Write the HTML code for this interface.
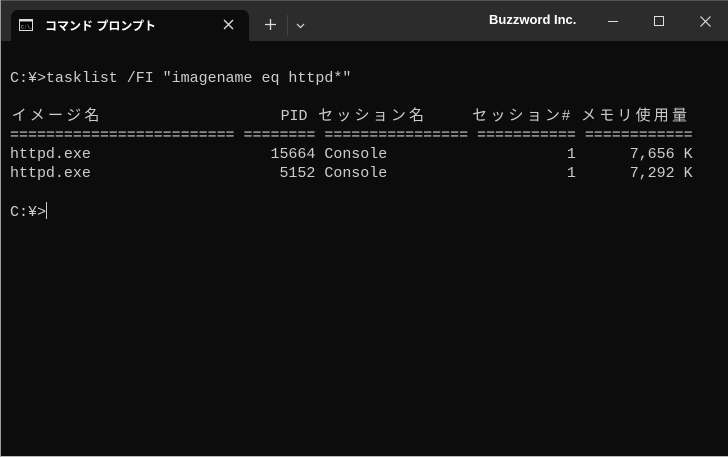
<!DOCTYPE html>
<html><head><meta charset="utf-8"><style>
html,body{margin:0;padding:0;width:728px;height:457px;overflow:hidden;background:#0c0c0c}
#win{position:absolute;left:0;top:0;border-left:1px solid #9a9a9a;border-bottom:1px solid #bbb;box-sizing:border-box;width:728px;height:457px;background:#0c0c0c}
#title{position:absolute;left:0;top:0;width:728px;height:40px;background:#2c2c2c;border-top:1px solid #555}
#tab{position:absolute;left:10px;top:9px;width:238px;height:31px;background:#0c0c0c;border-radius:7px 7px 0 0}
.t{position:absolute;color:#fff;font-family:"Liberation Sans","Noto Sans CJK JP",sans-serif;font-size:12px;font-weight:bold}
#term{position:absolute;left:9px;top:69px;font-family:"Liberation Mono","Noto Sans CJK JP",monospace;font-size:15px;letter-spacing:-0.02px;line-height:19px;color:#cccccc;white-space:pre}
.w{display:inline-block;width:18.2px;text-align:center;letter-spacing:0}
</style></head><body><div id="win">
<div id="title">
<div id="tab">
<svg style="position:absolute;left:8px;top:9px" width="14" height="12" viewBox="0 0 14 12"><rect x="0.5" y="0.5" width="13" height="11" fill="#000" stroke="#ddd"/><rect x="0.5" y="0.5" width="13" height="2" fill="#ddd"/><text x="2" y="9.5" font-size="5" fill="#ddd" font-family="Liberation Mono">C:\_</text></svg>
<div class="t" style="left:34px;top:7px">コマンド プロンプト</div>
<svg style="position:absolute;left:212px;top:9px" width="11" height="11" viewBox="0 0 11 11"><path d="M1 1L10 10M10 1L1 10" stroke="#ddd" stroke-width="1.3"/></svg>
</div>
<svg style="position:absolute;left:264px;top:18px" width="11" height="11" viewBox="0 0 11 11"><path d="M5.5 0V11M0 5.5H11" stroke="#ddd" stroke-width="1.3"/></svg>
<div style="position:absolute;left:286px;top:14px;width:1px;height:20px;background:#444"></div>
<svg style="position:absolute;left:295px;top:22px" width="9" height="6" viewBox="0 0 9 6"><path d="M1 1L4.5 4.5L8 1" stroke="#ddd" stroke-width="1.2" fill="none"/></svg>
<div class="t" style="left:488px;top:11px;font-size:13px">Buzzword Inc.</div>
<div style="position:absolute;left:607px;top:20px;width:10px;height:1px;background:#ddd"></div>
<div style="position:absolute;left:653px;top:15px;width:8px;height:8px;border:1px solid #ddd"></div>
<svg style="position:absolute;left:699px;top:15px" width="11" height="11" viewBox="0 0 11 11"><path d="M0.5 0.5L10.5 10.5M10.5 0.5L0.5 10.5" stroke="#ddd" stroke-width="1.2"/></svg>
</div>
<div id="term">C:¥&gt;tasklist /FI "imagename eq httpd*"

<span class="w">イ</span><span class="w">メ</span><span class="w">ー</span><span class="w">ジ</span><span class="w">名</span>                    PID <span class="w">セ</span><span class="w">ッ</span><span class="w">シ</span><span class="w">ョ</span><span class="w">ン</span><span class="w">名</span>     <span class="w">セ</span><span class="w">ッ</span><span class="w">シ</span><span class="w">ョ</span><span class="w">ン</span># <span class="w">メ</span><span class="w">モ</span><span class="w">リ</span><span class="w">使</span><span class="w">用</span><span class="w">量</span>
========================= ======== ================ =========== ============
httpd.exe                    15664 Console                    1      7,656 K
httpd.exe                     5152 Console                    1      7,292 K

C:¥&gt;<span style="display:inline-block;width:1px;height:17px;background:#ccc;vertical-align:-3px"></span></div>
</div></body></html>
